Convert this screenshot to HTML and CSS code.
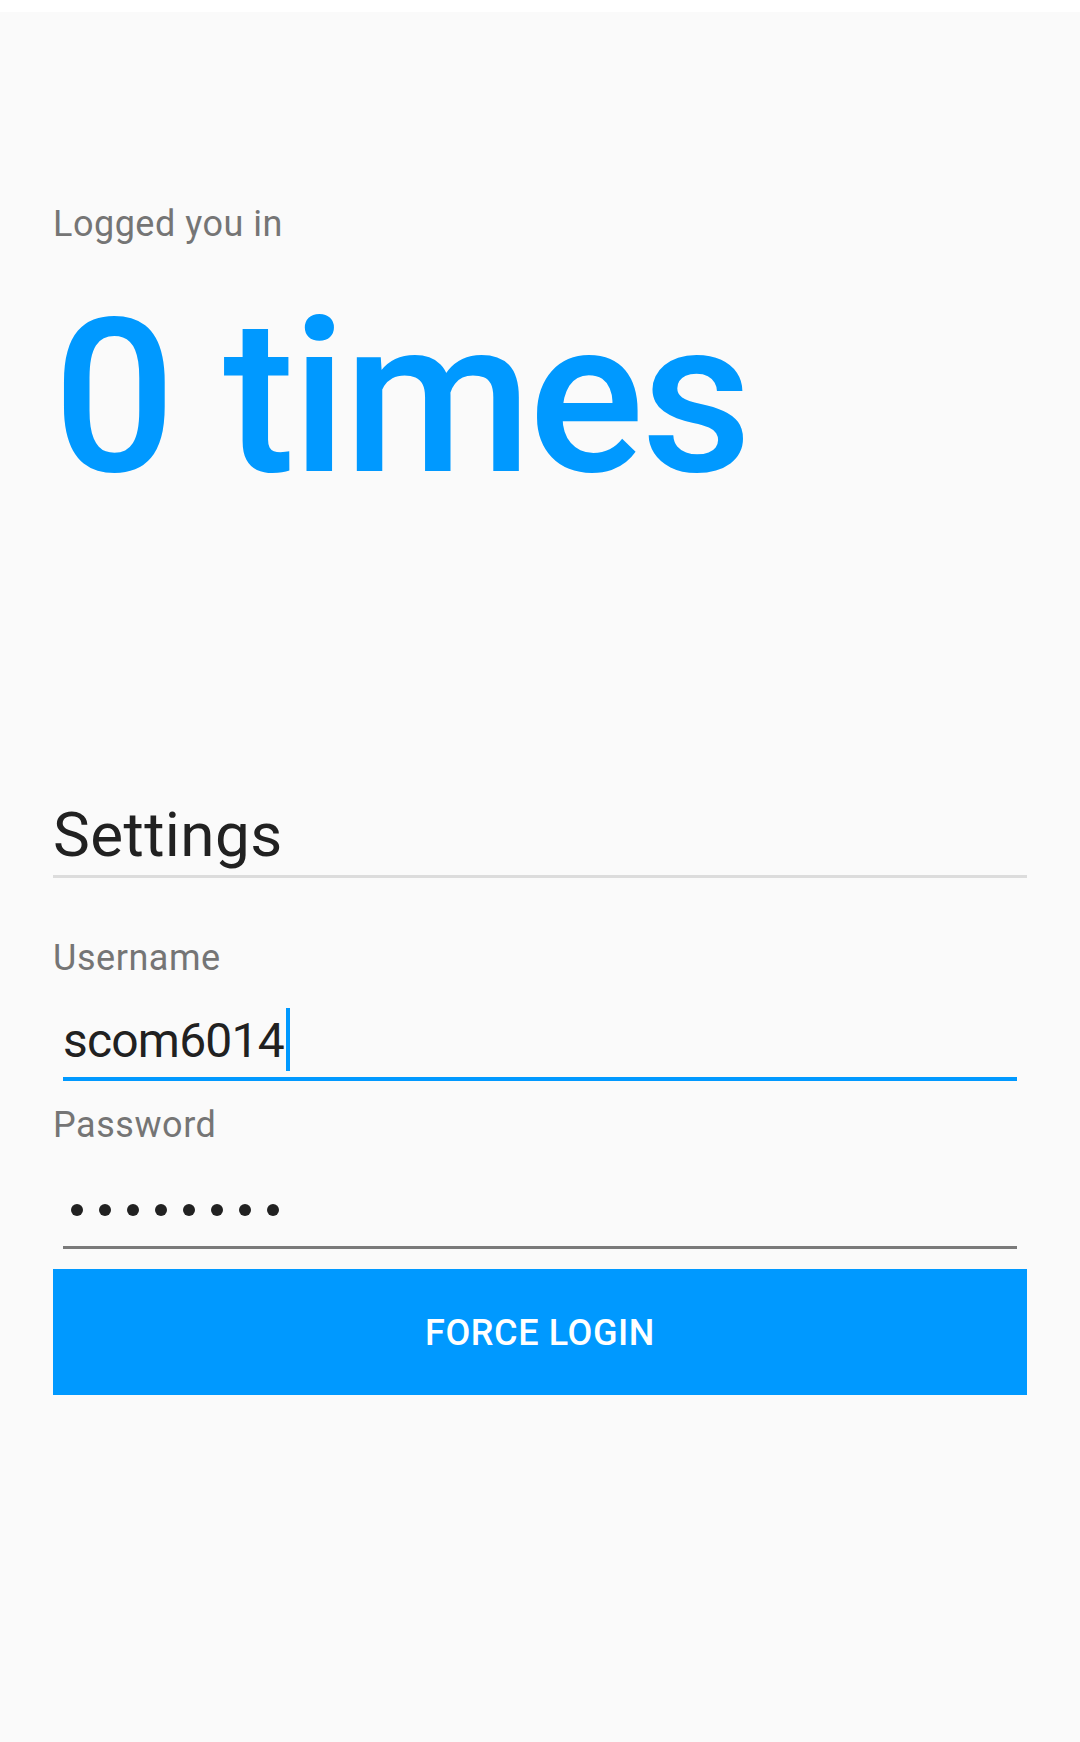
FILE: index.html
```html
<!DOCTYPE html>
<html>
<head>
<meta charset="utf-8">
<link rel="stylesheet" href="styles.css">
</head>
<body>
<div class="topbar"></div>
<main class="screen">
  <div class="caption">Logged you in</div>
  <div class="counter">0 times</div>

  <div class="section-title">Settings</div>
  <div class="divider"></div>

  <label class="field-label">Username</label>
  <div class="field focused">
    <div class="field-row">
      <span class="field-value">scom6014</span><span class="cursor"></span>
    </div>
    <div class="underline"></div>
  </div>

  <label class="field-label pw-label">Password</label>
  <div class="field">
    <div class="dots">
      <span class="dot"></span><span class="dot"></span><span class="dot"></span><span class="dot"></span>
      <span class="dot"></span><span class="dot"></span><span class="dot"></span><span class="dot"></span>
    </div>
    <div class="underline"></div>
  </div>

  <button class="btn"><span class="btn-label">FORCE LOGIN</span></button>
</main>
</body>
</html>
```

FILE: styles.css
```css
html, body {
  margin: 0;
  padding: 0;
}
body {
  background: #fafafa;
  font-family: Roboto, "Noto Sans", "Liberation Sans", sans-serif;
  height: 1742px;
  overflow: hidden;
}
.topbar {
  height: 12px;
  background: #ffffff;
}
.screen {
  padding: 0 53px;
  display: flex;
  flex-direction: column;
}
.caption {
  margin-top: 194px;
  font-size: 36px;
  line-height: 1;
  letter-spacing: 0.5px;
  color: #757575;
}
.counter {
  margin-top: 48px;
  font-size: 216px;
  line-height: 1;
  font-weight: 500;
  letter-spacing: -3.2px;
  color: #0099ff;
  white-space: nowrap;
}
.section-title {
  margin-top: 298px;
  font-size: 62px;
  line-height: 1;
  letter-spacing: 0.4px;
  color: #212121;
}
.divider {
  margin-top: 9px;
  height: 3px;
  background: #dcdcdc;
}
.field-label {
  display: block;
  margin-top: 62px;
  font-size: 36px;
  line-height: 1;
  letter-spacing: 0.55px;
  color: #757575;
}
.pw-label {
  margin-top: 26px;
}
.field {
  padding: 0 10px;
}
.field-row {
  margin-top: 32px;
  height: 63px;
  display: flex;
  align-items: center;
}
.field-value {
  font-size: 48px;
  line-height: 48px;
  letter-spacing: -0.8px;
  margin-top: 3px;
  color: #212121;
}
.cursor {
  width: 4px;
  height: 63px;
  background: #0099ff;
  margin-left: 2px;
}
.underline {
  height: 3px;
  background: #7a7a7a;
  margin-top: 30px;
}
.focused .underline {
  height: 4px;
  margin-top: 6px;
  background: #0099ff;
}
.dots {
  margin-top: 61px;
  height: 12px;
  display: flex;
  gap: 16px;
  padding-left: 8px;
}
.dot {
  width: 12px;
  height: 12px;
  border-radius: 50%;
  background: #212121;
}
.btn {
  margin-top: 20px;
  height: 126px;
  border: none;
  border-radius: 0;
  background: #0099ff;
  color: #ffffff;
  font-family: Roboto, "Noto Sans", "Liberation Sans", sans-serif;
  font-size: 36px;
  font-weight: 500;
  line-height: 1;
  letter-spacing: 0.6px;
  padding: 0;
  display: flex;
  align-items: center;
  justify-content: center;
}
.btn-label {
  margin-top: 2px;
}
```
